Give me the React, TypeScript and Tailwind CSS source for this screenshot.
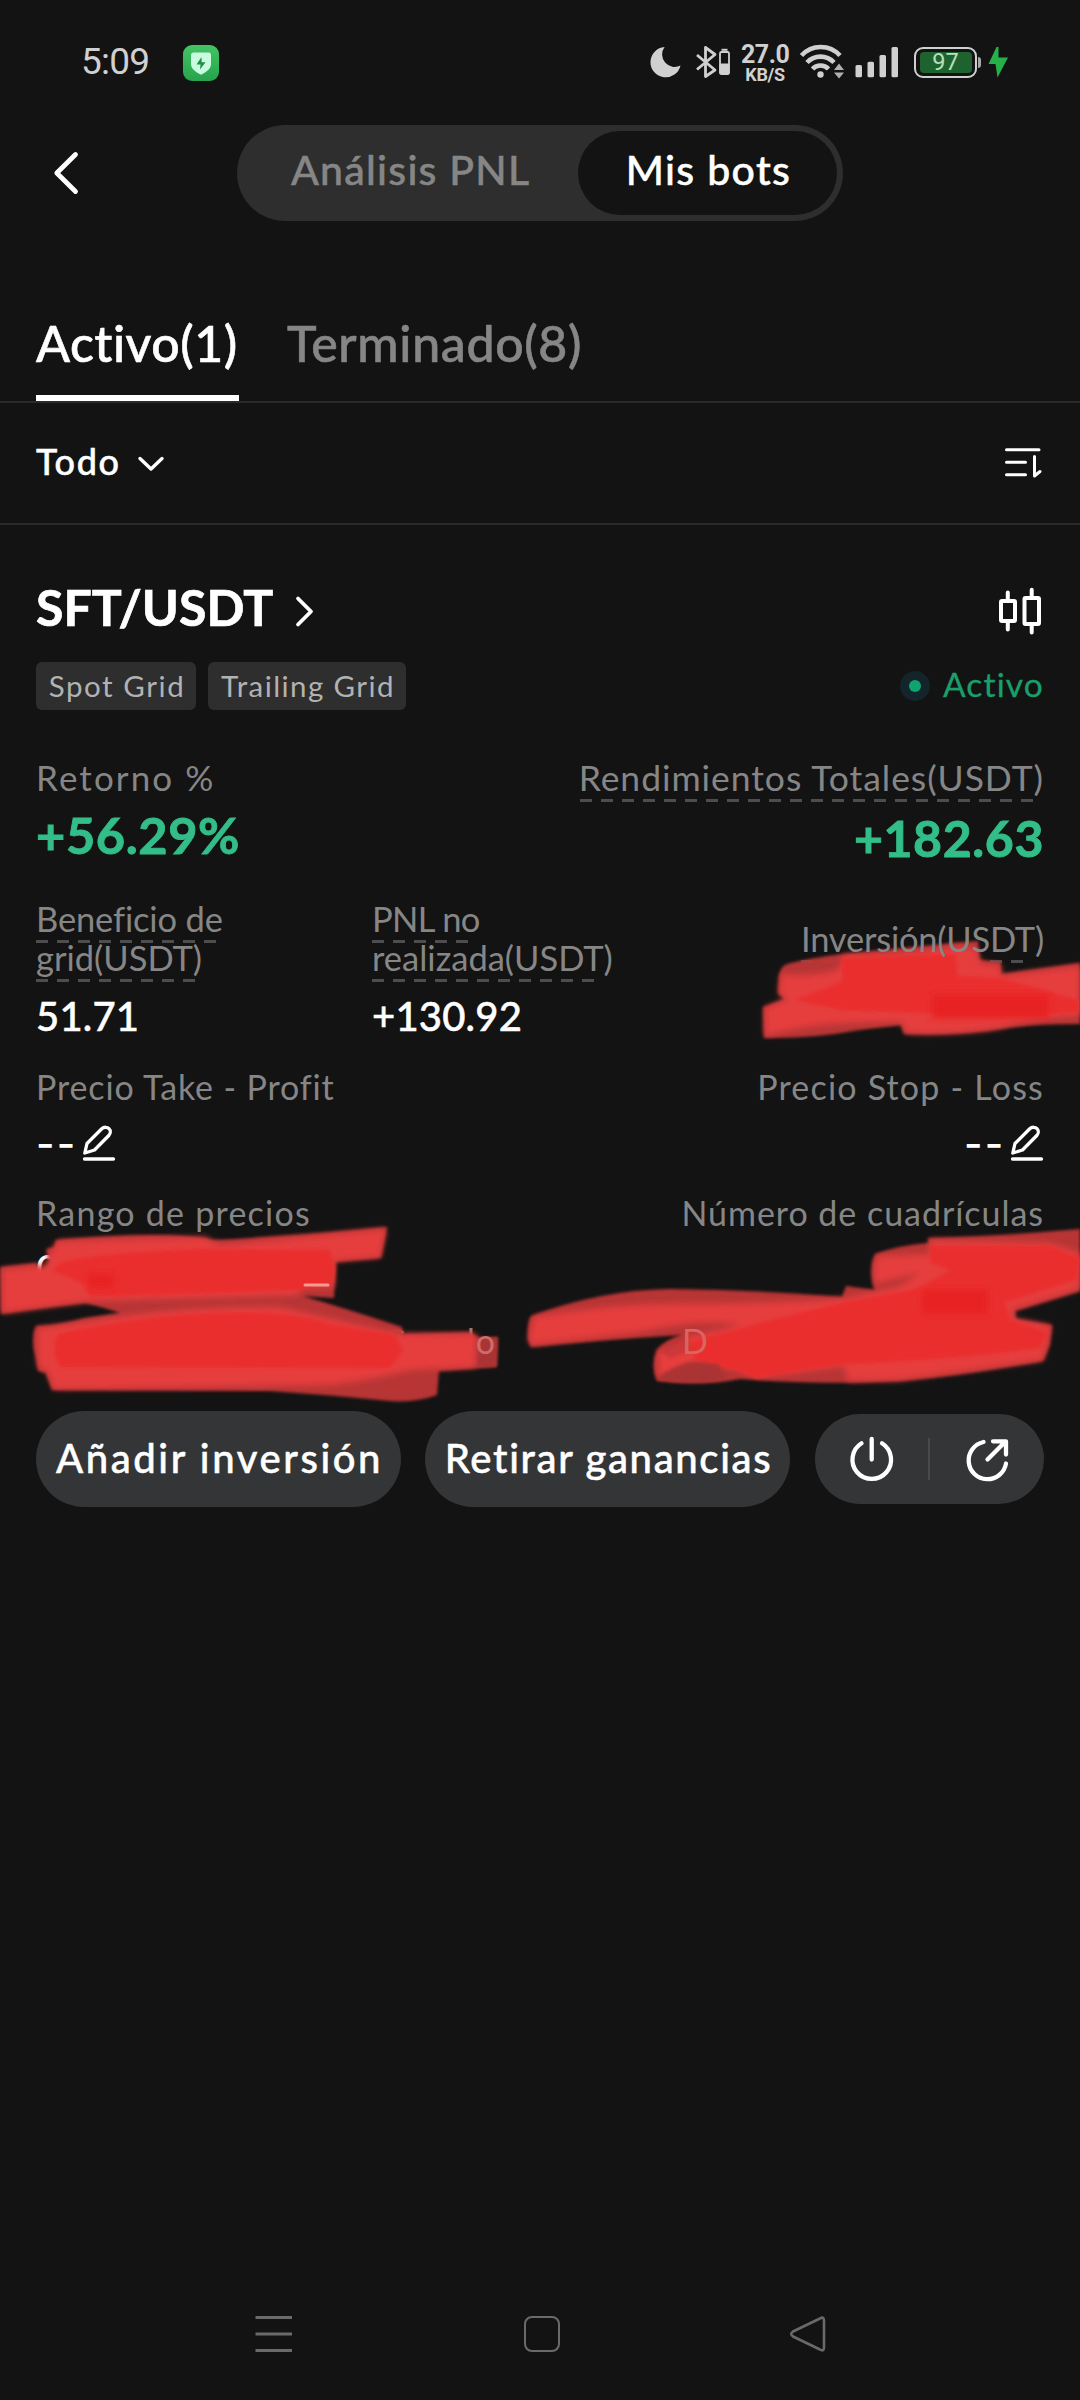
import type { ReactNode } from "react";

const LABEL = "text-[#868686] whitespace-nowrap";

function StatusBar() {
  return (
    <header className="flex h-[84px] items-start pl-[81px] pr-[72px] pt-[40px] text-[#d0d0d0]">
      <span className="w-[102px] font-[Roboto] text-[37px] leading-[44px] tracking-[-0.800px]">5:09</span>
      <svg className="mt-[5px] h-[36px] w-[36px]" viewBox="0 0 36 36">
        <defs>
          <linearGradient id="shield" x1="0" y1="0" x2="0" y2="1">
            <stop offset="0" stopColor="#43c463" />
            <stop offset="1" stopColor="#27a34c" />
          </linearGradient>
        </defs>
        <rect width="36" height="36" rx="9" fill="url(#shield)" />
        <path d="M10.500 7.500H25.500Q28 7.500 28 10V19C28 24 23 27 18 29.800C13 27 8 24 8 19V10Q8 7.500 10.500 7.500Z" fill="#c9fbe0" />
        <path d="M18.500 12L13.500 19.500H17.500L17 24.500L22.500 17.300H18.600Z" fill="#1f8f43" />
      </svg>
      <div className="ml-auto flex items-start">
        <svg className="mt-[6px] h-[32px] w-[32px]" viewBox="649 46 32 32">
          <path d="M664.600 47A15.200 15.200 0 1 0 680.500 65.500A12.500 12.500 0 0 1 664.600 47Z" fill="#d0d0d0" />
        </svg>
        <svg className="ml-[15px] mt-[5px] h-[34px] w-[35px]" viewBox="697 45 35 34" fill="none" stroke="#d0d0d0">
          <path d="M698 55L716 70L706.500 76.500V47.500L716 54.500L698 69.500" strokeWidth="2.800" strokeLinejoin="round" />
          <rect x="721" y="52" width="9" height="22" rx="1.500" strokeWidth="1.800" />
          <path d="M722.500 49.800H728.500" strokeWidth="2" />
          <rect x="720.500" y="63.500" width="10" height="11" rx="1.500" fill="#d0d0d0" stroke="none" />
        </svg>
        <div className="ml-[10px] w-[48px] text-center font-[Roboto] font-bold">
          <div className="h-[22px] text-[25px] leading-[22px] pt-[4px] tracking-[-0.500px]">27.0</div>
          <div className="h-[18px] pt-[4px] text-[18px] leading-[18px] tracking-[-0.300px]">KB/S</div>
        </div>
        <svg className="ml-[10px] mt-[3px] h-[38px] w-[46px]" viewBox="799 43 46 38" fill="none" stroke="#d0d0d0" strokeWidth="4.600">
          <path d="M801.500 55.500A26 26 0 0 1 840 55.500" />
          <path d="M807 62.500A18.500 18.500 0 0 1 834 62.500" />
          <path d="M812.500 69A11 11 0 0 1 828.500 69" />
          <circle cx="820.500" cy="74.500" r="3.200" fill="#d0d0d0" stroke="none" />
          <path d="M834 70L839 63.500L844 70ZM834 72.500H844L839 78.500Z" fill="#b0b0b0" stroke="none" />
        </svg>
        <svg className="ml-[10px] mt-[7px] h-[31px] w-[44px]" viewBox="855 47 44 31" fill="#d0d0d0">
          <rect x="855.500" y="65" width="6.500" height="12.300" rx="1.500" />
          <rect x="867.500" y="61.800" width="6.500" height="15.500" rx="1.500" />
          <rect x="879.500" y="55" width="6.500" height="22.300" rx="1.500" />
          <rect x="891.500" y="47" width="6.500" height="30.300" rx="1.500" />
        </svg>
        <div className="relative ml-[15px] mt-[7px] flex h-[31px] w-[63px] items-center justify-center rounded-[9px] border-[2.500px] border-[#d0d0d0]">
          <div className="flex h-[21px] w-[52px] items-center justify-center rounded-[4px] bg-[#1e632f] font-[Roboto] text-[23.500px] leading-[21px] text-[#b5e0b9]">97</div>
          <div className="absolute -right-[6px] top-[8px] h-[11px] w-[3px] rounded-r-[3px] bg-[#a8a8a8]" />
        </div>
        <svg className="ml-[10px] mt-[6px] h-[32px] w-[21px]" viewBox="987 46 21 32">
          <path d="M996.500 47L988.500 64H995.500L997.500 77.500L1008 57.500H998.500V47Z" fill="#25b04a" />
        </svg>
      </div>
    </header>
  );
}

function Dashed({ children, line }: { children: ReactNode; line: string }) {
  return (
    <span className="relative block w-fit">
      {children}
      <span
        className={
          "absolute left-0 h-[3px] bg-[repeating-linear-gradient(90deg,#4d4d4d_0_12px,transparent_12px_21px)] " + line
        }
      />
    </span>
  );
}

function Pencil() {
  return (
    <svg className="h-[37px] w-[34px]" viewBox="0 0 34 37" fill="none" stroke="#fff" strokeWidth="3.300" strokeLinecap="round" strokeLinejoin="round">
      <path d="M2.800 28L5 18.500L19.500 4C22 1.500 25.500 2 27 3.700C28.800 5.500 28.700 8.500 26.800 10.500L12.500 25L2.800 28Z" />
      <path d="M2.500 34H31.500" />
    </svg>
  );
}

function EmptyValue() {
  return (
    <div className="flex items-start">
      <span className="w-[46px] font-[Inter] text-[40px] font-medium leading-[37px] tracking-[2.200px]">--</span>
      <Pencil />
    </div>
  );
}

function Scribbles() {
  return (
    <svg className="pointer-events-none absolute left-0 top-[900px] h-[540px] w-[1080px]" viewBox="0 900 1080 540">
      <defs>
        <filter id="soft" x="-5%" y="-5%" width="110%" height="110%">
          <feGaussianBlur stdDeviation="1.500" />
        </filter>
        <filter id="softer" x="-5%" y="-5%" width="110%" height="110%">
          <feGaussianBlur stdDeviation="3" />
        </filter>
      </defs>
      <g filter="url(#soft)" fill="#c03737" fillOpacity="0.96">
        <path d="M778 993L779 975Q781 966 787 964Q810 958 842 954L955 943L978 941L980 960L1001 962L1001 974L1080 963V1024Q1030 1024 1000 1029Q960 1036 904 1034L901 1025L860 1030Q810 1039 764 1038L763 1007L784 999Z" />
        <path d="M0 1267L36 1263L42 1275L50 1262L46 1249L54 1247L56 1240Q170 1230 212 1240Q300 1236 387 1227L381 1258L336 1262L334 1298L303 1296Q350 1310 402 1327L403 1334L470 1332L478 1337H498L497 1367L439 1371L437 1395Q415 1403 390 1401Q330 1395 270 1391L52 1390L46 1373L38 1371L36 1358Q30 1340 36 1326Q60 1325 85 1318L120 1313Q102 1307 85 1303Q40 1308 1 1314Z" />
        <path d="M528 1340Q527 1322 531 1316Q600 1290 670 1289Q760 1290 842 1297L846 1286L875 1290L873 1286Q869 1268 875 1254Q900 1245 928 1243V1238Q1000 1236 1080 1229V1291L1015 1311L1016 1319L1052 1325L1050 1345L1043 1361Q960 1376 900 1381Q820 1385 756 1380L740 1379Q700 1387 657 1381Q650 1365 657 1350Q664 1340 682 1335Q600 1340 531 1347Z" />
      </g>
      <g filter="url(#softer)" fill="#e63d3e">
        <path d="M779 994L781 974Q820 978 840 968L843 955Q910 954 955 946L976 948L980 963L1001 966L1001 976L1080 966V1016Q1030 1018 1000 1028Q960 1035 906 1033L902 1022Q860 1022 830 1024Q800 1026 765 1036V1008L788 999Z" />
        <path d="M2 1269L46 1265L50 1253L58 1241L205 1237L220 1245L386 1229L380 1257L334 1261L334 1287L303 1287L298 1295L90 1301L2 1313Z" />
        <path d="M37 1328L64 1325L130 1315Q200 1306 280 1307L400 1334H476V1367L410 1370Q370 1380 330 1385L54 1389L47 1371L38 1366Z" />
        <path d="M529 1338L534 1317Q620 1302 700 1304Q790 1303 846 1298L900 1286L920 1272L876 1284Q872 1268 877 1256L930 1254V1240L1050 1243L1080 1253V1289L1014 1309L1012 1318L1051 1326L1043 1360Q960 1372 900 1380L848 1381L844 1366L760 1377L735 1370L700 1360L658 1378V1351L690 1336L740 1325Q700 1318 640 1332L531 1345Z" />
      </g>
      <g filter="url(#soft)" fill="#ea2e2f">
        <path d="M842 958L955 954L958 976L1000 978L1078 1000V1012L1000 1017Q960 1014 842 1010L795 1000L842 982Z" />
        <path d="M60 1264Q70 1255 200 1249L330 1250L335 1270L332 1284L300 1290L90 1297L84 1284L52 1270Z" />
        <path d="M58 1334Q140 1315 220 1313Q290 1310 330 1324L395 1335L403 1350L390 1368L60 1367Q50 1350 58 1334Z" />
        <path d="M690 1342Q760 1322 846 1302L920 1288L950 1270L930 1262V1246L1050 1246L1080 1258L1076 1280L1005 1302L1010 1320L1048 1332L1040 1348Q950 1360 846 1364L756 1378L735 1370L695 1360Z" />
      </g>
      <g filter="url(#softer)" fill="#e82021">
        <rect x="932" y="995" width="117" height="23" />
        <rect x="88" y="1274" width="26" height="14" />
        <rect x="922" y="1290" width="66" height="24" />
      </g>
      <g filter="url(#soft)" fill="#a83232" fillOpacity="0.85">
        <path d="M480 1338H497L496 1366L477 1367Z" />
        <path d="M657 1379Q668 1368 690 1362L718 1364L726 1378Q700 1385 657 1379Z" />
        <path d="M660 1352Q667 1341 684 1336L694 1350L670 1358Z" fillOpacity="0.4" />
      </g>
      <path d="M305 1285H328" stroke="#f29a94" strokeWidth="3" strokeLinecap="round" />
    </svg>
  );
}

export default function App() {
  return (
    <div className="relative flex h-[2400px] w-[1080px] flex-col overflow-hidden bg-[#131313] font-[Lato,sans-serif] text-white [font-variant-ligatures:none]">
      <StatusBar />

      <div className="flex h-[178px] items-start pt-[41px]">
        <svg className="ml-[50px] mt-[24px] h-[48px] w-[32px]" viewBox="50 149 32 48" fill="none" stroke="#fff" strokeWidth="4.800" strokeLinecap="round" strokeLinejoin="round">
          <path d="M75.500 154.500L56.800 173L75.500 191.500" />
        </svg>
        <div className="ml-[155px] flex h-[96px] w-[606px] rounded-full bg-[#2e2e2e] p-[6px] text-[41px] font-medium [-webkit-text-stroke:0.500px]">
          <button className="flex h-[84px] w-[335px] items-start whitespace-nowrap pl-[48px] leading-[78px] tracking-[1.250px] text-[#868686]">Análisis PNL</button>
          <button className="flex h-[84px] w-[259px] items-start justify-center rounded-full bg-[#131313] pl-[2px] leading-[78px] tracking-[1.350px]">Mis bots</button>
        </div>
      </div>

      <nav className="flex h-[141px] border-b-2 border-[#2a2a2a] px-[36px] pt-[50px] text-[50px] font-medium leading-[62px] [-webkit-text-stroke:0.600px]">
        <button className="flex h-[89px] w-[203px] items-start whitespace-nowrap border-b-[6px] border-white tracking-[0.500px]">Activo(1)</button>
        <button className="ml-[48px] flex items-start whitespace-nowrap tracking-[0.650px] text-[#868686]">Terminado(8)</button>
      </nav>

      <div className="flex h-[122px] items-center border-b-2 border-[#2a2a2a] px-[36px]">
        <span className="-mt-[4px] text-[36px] font-medium leading-[44px] tracking-[1.600px] [-webkit-text-stroke:0.500px]">Todo</span>
        <svg className="ml-[15px] mt-[1px] h-[20px] w-[30px]" viewBox="0 0 30 20" fill="none" stroke="#fff" strokeWidth="3.400" strokeLinecap="round" strokeLinejoin="round">
          <path d="M4 4.500L15 15L26 4.500" />
        </svg>
        <svg className="-mt-[2px] ml-auto h-[36px] w-[42px]" viewBox="1002 444 42 36" fill="none" stroke="#fff" strokeWidth="3" strokeLinecap="round" strokeLinejoin="round">
          <path d="M1006.500 449.700H1039M1006.500 462.200H1025.500M1006.500 474.800H1025.500M1034.500 456.500V476L1040 471.500" />
        </svg>
      </div>

      <main className="flex flex-col px-[36px]">
        <div className="mt-[52px] flex h-[60px] items-center">
          <h1 className="text-[50px] font-bold leading-[60px] [-webkit-text-stroke:0.700px]">SFT/USDT</h1>
          <svg className="ml-[20px] mt-[8px] h-[36px] w-[24px]" viewBox="0 0 24 36" fill="none" stroke="#fff" strokeWidth="3.800" strokeLinecap="round" strokeLinejoin="round">
            <path d="M5 5.500L18 18.500L5 31.500" />
          </svg>
          <svg className="ml-auto mt-[7px] h-[48px] w-[46px]" viewBox="998 587 46 48" fill="none" stroke="#fff" strokeWidth="4" strokeLinecap="round" strokeLinejoin="round">
            <rect x="1001" y="601" width="14" height="20" rx="1" />
            <path d="M1007.800 592.500V601M1007.800 621V629.500" />
            <rect x="1024.500" y="598" width="14.500" height="26" rx="1" />
            <path d="M1031.700 589.800V598M1031.700 624V632.500" />
          </svg>
        </div>

        <div className="mt-[25px] flex h-[48px] items-center">
          <span className="flex h-[48px] w-[160px] items-center justify-center whitespace-nowrap rounded-[6px] bg-[#2e2e2e] pl-[2px] text-[29.500px] tracking-[1.570px] text-[#b2b2b2]">Spot Grid</span>
          <span className="ml-[12px] flex h-[48px] w-[198px] items-center justify-center whitespace-nowrap rounded-[6px] bg-[#2e2e2e] pl-[2px] text-[29.500px] tracking-[1.420px] text-[#b2b2b2]">Trailing Grid</span>
          <span className="ml-auto flex h-[30px] w-[30px] items-center justify-center rounded-full bg-[#13242a]">
            <span className="h-[12px] w-[12px] rounded-full bg-[#0fa36f]" />
          </span>
          <span className="-mt-[4px] ml-[13px] text-[33.500px] leading-[44px] tracking-[1.160px] text-[#1a9f6c] [-webkit-text-stroke:0.300px]">Activo</span>
        </div>

        <div className="mt-[47px] flex justify-between">
          <div>
            <div className={LABEL + " text-[35px] leading-[40px] tracking-[2.100px]"}>Retorno %</div>
            <div className="mt-[13px] text-[50.500px] font-bold leading-[50px] tracking-[0.600px] text-[#33bd88] [-webkit-text-stroke:0.900px]">+56.29%</div>
          </div>
          <div className="flex flex-col items-end">
            <Dashed line="left-[1px] top-[42px] w-[453px]">
              <span className={LABEL + " block text-[35.500px] leading-[41px] tracking-[0.950px]"}>Rendimientos Totales(USDT)</span>
            </Dashed>
            <div className="mt-[15px] text-[50px] font-bold leading-[50px] tracking-[0.600px] text-[#33bd88] [-webkit-text-stroke:0.900px]">+182.63</div>
          </div>
        </div>

        <div className="mt-[36px] grid grid-cols-[336px_336px_336px] text-[34.500px]">
          <div className={LABEL + " leading-[39px]"}>
            <Dashed line="top-[41px] w-[180px]"><span className="tracking-[-0.150px]">Beneficio de</span></Dashed>
            <Dashed line="top-[41px] w-[159px]">grid(USDT)</Dashed>
            <div className="mt-[14px] text-[40px] font-medium leading-[50px] tracking-[0.200px] text-white [-webkit-text-stroke:0.500px]">51.71</div>
          </div>
          <div className={LABEL + " leading-[39px]"}>
            <Dashed line="top-[41px] w-[96px]"><span className="tracking-[-0.600px]">PNL no</span></Dashed>
            <Dashed line="top-[41px] w-[222px]">realizada(USDT)</Dashed>
            <div className="mt-[14px] text-[40px] font-medium leading-[50px] tracking-[0.200px] text-white [-webkit-text-stroke:0.500px]">+130.92</div>
          </div>
          <div className={LABEL + " flex flex-col items-end pt-[20px] leading-[39px]"}>
            <Dashed line="top-[41px] w-[222px]"><span className="relative z-10 tracking-[-0.220px]">Inversión(USDT)</span></Dashed>
          </div>
        </div>

        <div className="mt-[26px] flex justify-between">
          <div>
            <div className={LABEL + " text-[34px] leading-[40px] tracking-[0.860px]"}>Precio Take - Profit</div>
            <div className="mt-[18px]"><EmptyValue /></div>
          </div>
          <div className="flex flex-col items-end">
            <div className={LABEL + " text-[34px] leading-[40px] tracking-[1.200px]"}>Precio Stop - Loss</div>
            <div className="mt-[18px]"><EmptyValue /></div>
          </div>
        </div>

        <div className="mt-[31px] flex justify-between">
          <div>
            <div className={LABEL + " text-[34px] leading-[40px] tracking-[1.240px]"}>Rango de precios</div>
            <div className="mt-[18px] flex h-[37px] items-center">
              <span className="w-[262px] text-[40px] font-medium leading-[37px]">0</span>
              <Pencil />
            </div>
          </div>
          <div className={LABEL + " text-[34px] leading-[40px] tracking-[0.960px]"}>Número de cuadrículas</div>
        </div>

        <div className={LABEL + " mt-[33px] flex text-[34px] leading-[40px] tracking-[1px]"}>
          <span className="w-[460px] text-right">Cread<span className="relative z-10 text-[#cd6c6a]">o</span></span>
          <span className="relative z-10 ml-[186px] text-[#d96562]">D</span>
        </div>

        <div className="mt-[50px] flex h-[96px] items-center">
          <button className="flex h-[96px] w-[365px] items-start justify-center whitespace-nowrap rounded-full bg-[#343536] pl-[2px] text-[40px] font-medium leading-[94px] tracking-[2.600px] [-webkit-text-stroke:0.500px]">Añadir inversión</button>
          <button className="ml-[24px] flex h-[96px] w-[365px] items-start justify-center whitespace-nowrap rounded-full bg-[#343536] pl-[2px] text-[40px] font-medium leading-[94px] tracking-[1.660px] [-webkit-text-stroke:0.500px]">Retirar ganancias</button>
          <div className="ml-[25px] flex h-[90px] w-[229px] items-center rounded-full bg-[#343536]">
            <svg className="ml-[32px] h-[50px] w-[50px]" viewBox="847 1436 50 50" fill="none" stroke="#fff" strokeWidth="4.300" strokeLinecap="round">
              <path d="M861.500 1445.300A19.300 19.300 0 1 0 882 1445.300M871.700 1441V1461.500" />
            </svg>
            <span className="ml-[31px] h-[42px] w-[2px] bg-[#4a4a4a]" />
            <svg className="ml-[34px] h-[50px] w-[50px]" viewBox="963 1436 50 50" fill="none" stroke="#fff" strokeWidth="4.300" strokeLinecap="round" strokeLinejoin="round">
              <path d="M982.500 1444A18.800 18.800 0 1 0 1005 1465.500M986.500 1461.500L1004.500 1443.500M992 1443.300H1005V1456.500" />
            </svg>
          </div>
        </div>
      </main>

      <footer className="mt-auto flex h-[84px] items-start pl-[255px]">
        <svg className="h-[36px] w-[38px]" viewBox="0 0 38 36" fill="none" stroke="#6a6a6a" strokeWidth="3">
          <path d="M0.500 1.500H37M0.500 18H37M0.500 34.500H37" />
        </svg>
        <span className="ml-[231px] h-[36px] w-[36px] rounded-[8px] border-[2.500px] border-[#6a6a6a]" />
        <svg className="ml-[229px] h-[37px] w-[38px]" viewBox="789 2316 38 37" fill="none" stroke="#6a6a6a" strokeWidth="2.600" strokeLinejoin="round">
          <path d="M820 2318.500Q824 2316 824 2321V2347Q824 2352 820 2349.500L793 2336.500Q789.500 2334 793 2331.500Z" />
        </svg>
      </footer>

      <Scribbles />
    </div>
  );
}
